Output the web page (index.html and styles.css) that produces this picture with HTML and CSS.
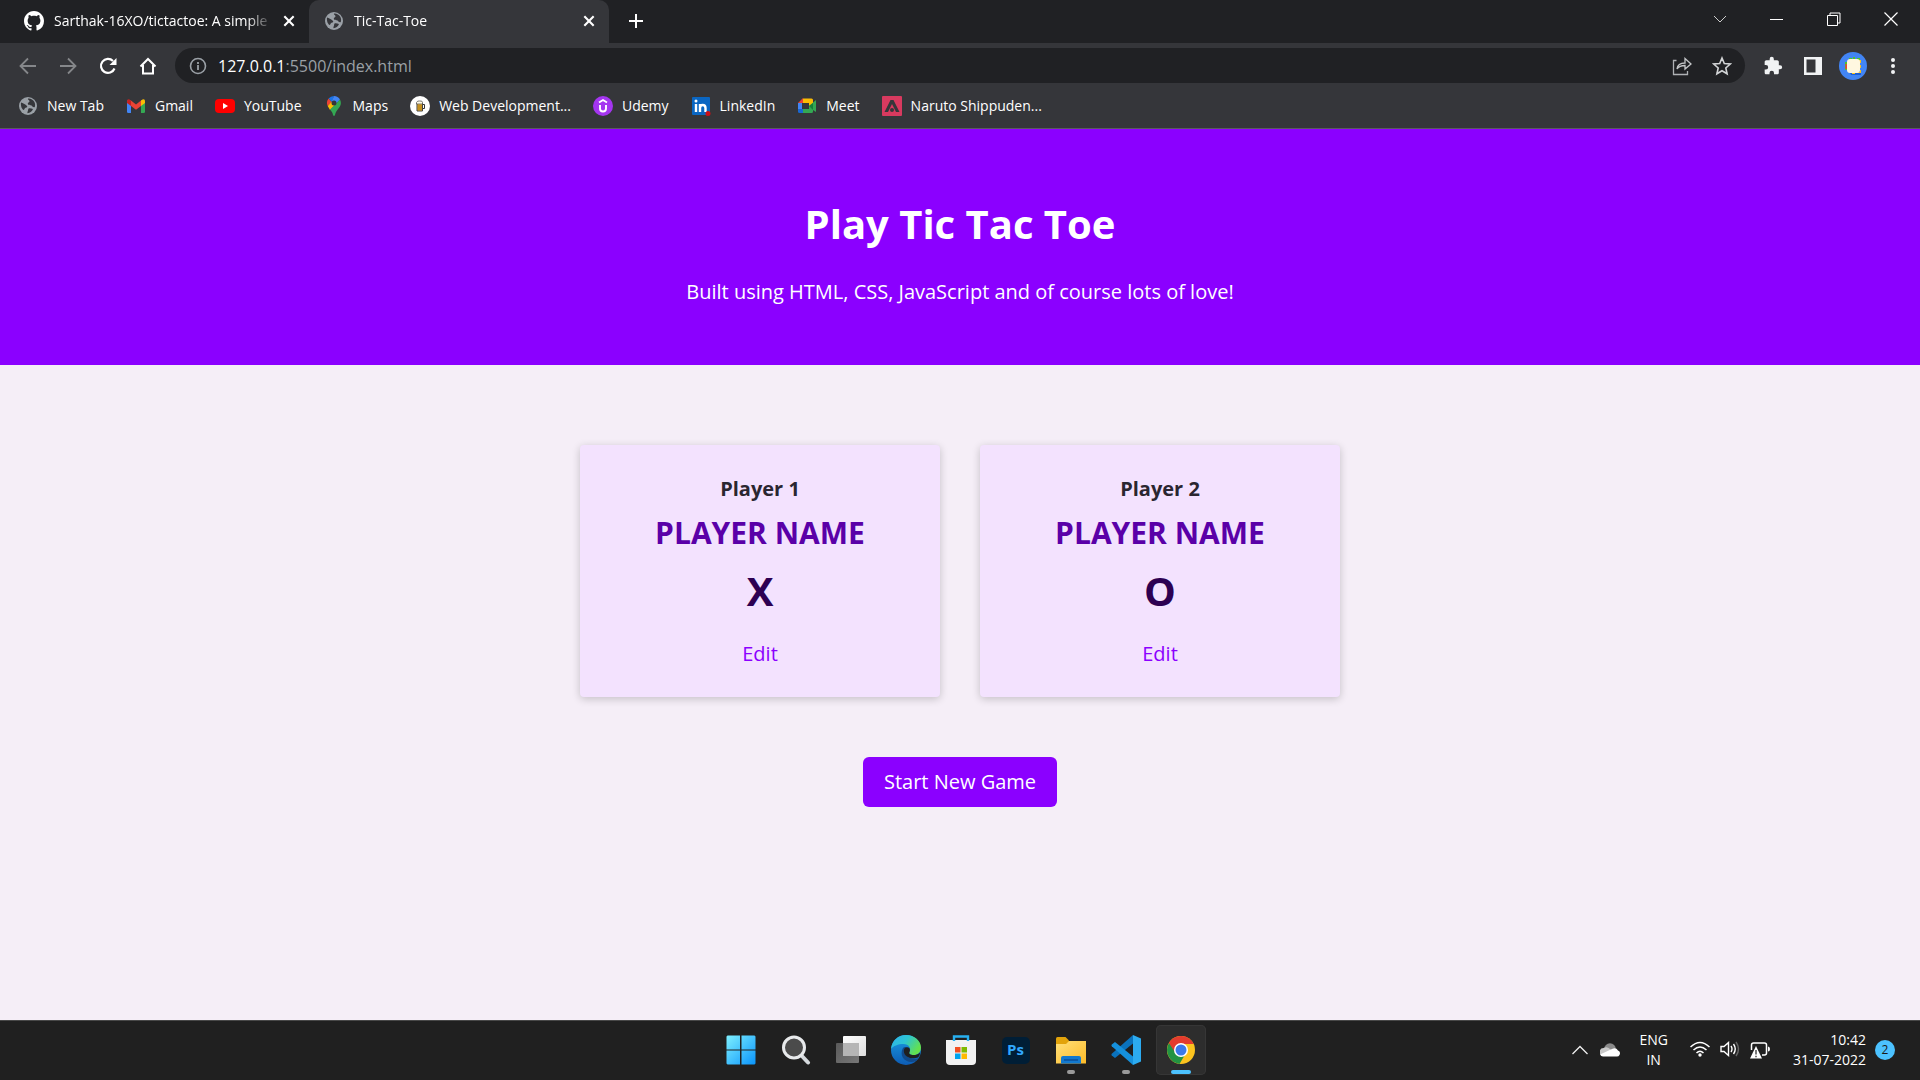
FILE: index.html
```html
<!DOCTYPE html>
<html lang="en">
<head>
<meta charset="utf-8">
<title>Tic-Tac-Toe</title>
<link rel="stylesheet" href="styles.css">
</head>
<body>
<svg class="defs" aria-hidden="true">
  <defs>
    <symbol id="globe" viewBox="0 0 20 20">
      <circle cx="10" cy="10" r="9" fill="#9aa0a6"/>
      <path d="M3 6.500C5 7 7 8 8.500 9.500c1.500 1.200.5 2-1 2.200-1.200.3-.8 2-1.800 2.300C4 13.500 2.500 10 3 6.500zM10 2.500c2.500-.3 5 1 6.400 3.500.8 1.800.9 3.500.4 5-1.500.8-2.300-.5-3.300-1.500-1.300-.8-2.500 0-3.500-1.300-.8-1.700 1.800-1.800 1.500-3.200C11 4 9.500 3.700 10 2.500zM10.500 12.500c1.500-.8 3 .3 4.500.5-1 2.500-3 4-5.500 4.200-.5-1.500.8-2 .5-3.200z" fill="#35363a"/>
    </symbol>
    <symbol id="cross" viewBox="0 0 12 12"><path d="M2 2l8 8M10 2l-8 8" stroke="#fff" stroke-width="1.800"/></symbol>
    <linearGradient id="win" x1="0" y1="0" x2="1" y2="1"><stop offset="0" stop-color="#7ef0ff"/><stop offset="1" stop-color="#0a94fb"/></linearGradient>
    <linearGradient id="view" x1="0" y1="0" x2="1" y2="1"><stop offset="0" stop-color="#fff"/><stop offset="1" stop-color="#ddd"/></linearGradient>
    <linearGradient id="pane" x1="0" y1="0" x2="1" y2="1"><stop offset="0" stop-color="#5a5a5a"/><stop offset="1" stop-color="#777"/></linearGradient>
    <linearGradient id="edgeTop" x1="0" y1="0" x2="1" y2=".5"><stop offset="0" stop-color="#2fb0ec"/><stop offset=".5" stop-color="#2dc5d4"/><stop offset="1" stop-color="#63e14e"/></linearGradient>
    <linearGradient id="edgeLow" x1="0" y1="0" x2="0" y2="1"><stop offset="0" stop-color="#1b9de2"/><stop offset="1" stop-color="#0d5cb5"/></linearGradient>
    <linearGradient id="folder" x1="0" y1="0" x2="1" y2="1"><stop offset="0" stop-color="#ffe07a"/><stop offset="1" stop-color="#fdbb28"/></linearGradient>
  </defs>
</svg>

<div class="browser">
  <div class="tabstrip">
    <div class="tab">
      <svg class="fav" viewBox="0 0 16 16"><path fill="#fff" d="M8 0C3.580 0 0 3.580 0 8c0 3.540 2.290 6.530 5.470 7.590.4.070.55-.17.55-.38 0-.19-.01-.82-.01-1.490-2.010.37-2.530-.49-2.690-.94-.09-.23-.48-.94-.82-1.130-.28-.15-.68-.52-.01-.53.63-.01 1.080.58 1.230.82.72 1.210 1.870.87 2.330.66.070-.52.28-.87.51-1.070-1.780-.2-3.640-.89-3.640-3.950 0-.87.31-1.590.82-2.150-.08-.2-.36-1.020.08-2.120 0 0 .67-.21 2.200.82.64-.18 1.320-.27 2-.27s1.360.09 2 .27c1.530-1.040 2.200-.82 2.200-.82.44 1.100.16 1.920.08 2.120.51.56.82 1.270.82 2.150 0 3.070-1.870 3.750-3.650 3.950.29.25.54.73.54 1.480 0 1.070-.01 1.930-.01 2.200 0 .21.15.46.55.38A8 8 0 0 0 16 8c0-4.420-3.580-8-8-8z"/></svg>
      <span class="tab-title">Sarthak-16XO/tictactoe: A simple</span>
      <button class="tab-close" aria-label="Close tab"><svg width="14" height="14"><use href="#cross"/></svg></button>
    </div>
    <div class="tab tab-active">
      <svg class="fav"><use href="#globe"/></svg>
      <span class="tab-title">Tic-Tac-Toe</span>
      <button class="tab-close" aria-label="Close tab"><svg width="14" height="14"><use href="#cross"/></svg></button>
    </div>
    <button class="new-tab" aria-label="New tab"><svg width="16" height="16" viewBox="0 0 16 16"><path d="M8 1v14M1 8h14" stroke="#fff" stroke-width="2"/></svg></button>
    <div class="window-controls">
      <button aria-label="Search tabs"><svg width="14" height="14" viewBox="0 0 14 14"><path d="M1 4l6 6 6-6" stroke="#ccc" fill="none"/></svg></button>
      <button aria-label="Minimise"><svg width="14" height="14" viewBox="0 0 14 14"><path d="M0 7.500h13" stroke="#fff"/></svg></button>
      <button aria-label="Restore"><svg width="14" height="14" viewBox="0 0 14 14"><path d="M.5 3.500h10v10H.500zM3 3V1h10v10h-2" stroke="#fff" fill="none"/></svg></button>
      <button aria-label="Close"><svg width="14" height="14" viewBox="0 0 14 14"><path d="M.5 .5l13 13M13.500 .5l-13 13" stroke="#fff" stroke-width="1.200"/></svg></button>
    </div>
  </div>

  <div class="toolbar">
    <button class="tool" aria-label="Back"><svg width="18" height="18" viewBox="0 0 18 18"><path d="M17 9H2M9 1.500L1.500 9 9 16.500" stroke="#85878a" stroke-width="1.800" fill="none"/></svg></button>
    <button class="tool" aria-label="Forward"><svg width="18" height="18" viewBox="0 0 18 18"><path d="M1 9h15M9 1.500L16.500 9 9 16.500" stroke="#85878a" stroke-width="1.800" fill="none"/></svg></button>
    <button class="tool" aria-label="Reload"><svg width="18" height="18" viewBox="0 0 18 18"><path d="M15.500 11.500A7 7 0 1 1 14 4" stroke="#fff" stroke-width="2.200" fill="none"/><path d="M17.500 1v7h-7z" fill="#fff"/></svg></button>
    <button class="tool" aria-label="Home"><svg width="18" height="18" viewBox="0 0 18 18"><path d="M1.500 9.500L9 2l7.500 7.500M4 8v8.500h10V8" stroke="#fff" stroke-width="2" fill="none"/></svg></button>
    <div class="omnibox">
      <button class="omni-btn" aria-label="Site information"><svg width="18" height="18" viewBox="0 0 18 18"><circle cx="9" cy="9" r="7.500" stroke="#9aa0a6" stroke-width="1.600" fill="none"/><path d="M9 8v5M9 5v2" stroke="#9aa0a6" stroke-width="1.800"/></svg></button>
      <a class="url" href="#"><span class="url-host">127.0.0.1</span>:5500/index.html</a>
      <button class="omni-btn" aria-label="Share"><svg width="20" height="20" viewBox="0 0 20 20"><path d="M4.500 4.500H1.500V18.500H15.500V15" stroke="#aeb1b4" stroke-width="1.300" fill="none"/><path d="M5 13c.5-4 3-6 8-6V2.500l6 5.500-6 5v-3.500c-4 0-6 .5-8 3.500z" stroke="#c4c6c8" stroke-width="1.300" fill="none"/></svg></button>
      <button class="omni-btn" aria-label="Bookmark this page"><svg width="20" height="20" viewBox="0 0 20 20"><path d="M10 2l2.300 5.500 6 .5-4.500 4 1.300 5.800L10 14.700 4.900 17.800 6.200 12 1.700 8l6-.5z" stroke="#d2d4d6" stroke-width="1.600" fill="none"/></svg></button>
    </div>
    <button class="tool" aria-label="Extensions"><svg width="20" height="20" viewBox="0 0 24 24"><path fill="#f1f3f4" d="M20.500 11H19V7c0-1.100-.9-2-2-2h-4V3.500a2.500 2.500 0 0 0-5 0V5H4c-1.100 0-2 .9-2 2v3.800h1.500a2.700 2.700 0 0 1 0 5.400H2V20c0 1.100.9 2 2 2h3.800v-1.500a2.700 2.700 0 0 1 5.400 0V22H17c1.100 0 2-.9 2-2v-4h1.500a2.500 2.500 0 0 0 0-5z"/></svg></button>
    <button class="tool" aria-label="Side panel"><svg width="18" height="18" viewBox="0 0 18 18"><path fill="#f1f3f4" fill-rule="evenodd" d="M0 0h18v18H0zM2.500 2.500v13h9v-13z"/></svg></button>
    <button class="tool" aria-label="Profile"><svg width="28" height="28" viewBox="0 0 28 28"><circle cx="14" cy="14" r="14" fill="#4285f4"/><path d="M10 19h12v4H12z" fill="#1d5fd6"/><path d="M20 8h2v3h-1v2h1v3h-1v2h1v3h-6v1h-3v-2h8z" fill="#fbc31b"/><path d="M7 10v8M10 7h3M14 6h2M18 7h3" stroke="#4ec52c" stroke-width="2"/><path d="M7.500 12v5" stroke="#e94335" stroke-width="2"/><rect x="8" y="7" width="13" height="14" rx="3" fill="#fff7e0"/></svg></button>
    <button class="tool" aria-label="Menu"><svg width="6" height="18" viewBox="0 0 6 18"><g fill="#f1f3f4"><circle cx="3" cy="3" r="2"/><circle cx="3" cy="9" r="2"/><circle cx="3" cy="15" r="2"/></g></svg></button>
  </div>

  <nav class="bookmarks" aria-label="Bookmarks">
    <a href="#"><svg><use href="#globe"/></svg>New Tab</a>
    <a href="#"><svg viewBox="0 0 20 20"><path d="M1 4.500h4V17H2.200Q1 17 1 15.800z" fill="#4285f4"/><path d="M15 4.500h4v11.300q0 1.200-1.200 1.200H15z" fill="#34a853"/><path d="M15 4.600l1.500-1.200Q19 2.500 19 5.500V7l-4 3z" fill="#fbbc04"/><path d="M5 4.600L3.500 3.400Q1 2.500 1 5.500V7l4 3z" fill="#c5221f"/><path d="M5 4.600l5 3.900 5-3.900V10l-5 3.800L5 10z" fill="#ea4335"/></svg>Gmail</a>
    <a href="#"><svg viewBox="0 0 20 20"><rect y="3" width="20" height="14" rx="4" fill="#f00"/><path d="M8 7v6l5-3z" fill="#fff"/></svg>YouTube</a>
    <a href="#"><svg viewBox="0 0 20 20"><path d="M4.600 2.500A7 7 0 0 0 3.700 10L8 6z" fill="#ea4335"/><path d="M3.700 10L12 1l1 7-7 6z" fill="#fbbc04"/><path d="M10 0a7 7 0 0 0-5.400 2.500L8 6z" fill="#1a73e8"/><path d="M10 0a7 7 0 0 1 6 3.500L12 8 8 5z" fill="#4285f4"/><path d="M16 3.500c1.500 3 1 5.500-.8 8C13 14.500 11.500 16 11 19q-1 2-2 0c-.3-2-1.200-3.600-3-5.500z" fill="#34a853"/><circle cx="10" cy="7" r="2.500" fill="#35363a"/></svg>Maps</a>
    <a href="#"><svg viewBox="0 0 20 20"><circle cx="10" cy="10" r="10" fill="#fff"/><path d="M12.500 8.500h2v4h-2" stroke="#333" fill="none"/><path d="M7 7h5.500v8H7z" fill="#f5b42a" stroke="#444"/><path d="M9 9v5M11 9v5" stroke="#7a5a10" stroke-width=".8"/><path d="M6.500 8V6.500q1-2 3-1.500 3-.5 3 1.500V8z" fill="#fffbe6" stroke="#555" stroke-width=".8"/></svg>Web Development...</a>
    <a href="#"><svg viewBox="0 0 20 20"><circle cx="10" cy="10" r="10" fill="#a435f0"/><path d="M7 9v3.500a3 3 0 0 0 6 0V9M6 6.500l4-2.500 4 2.500" stroke="#fff" stroke-width="1.900" fill="none"/></svg>Udemy</a>
    <a href="#"><svg viewBox="0 0 20 20"><rect x="1" y="1" width="18" height="18" rx="1" fill="#0a66c2"/><path d="M5 8v8M9 16V8M9 12q0-3 2.700-3T14.500 12v4" stroke="#fff" stroke-width="2.400" fill="none"/><circle cx="5" cy="5" r="1.500" fill="#fff"/><circle cx="17" cy="17.500" r="2.500" fill="#cc1016"/></svg>LinkedIn</a>
    <a href="#"><svg viewBox="0 0 20 20"><path d="M1 7l5-5v5z" fill="#ea4335"/><path d="M1 7h4v6H1z" fill="#4285f4"/><path d="M1 13h5v4H2.500Q1 17 1 15.500z" fill="#1967d2"/><path d="M6 2.500h8.500Q16 2.500 16 4v6h-4V7H6z" fill="#fbbc04"/><path d="M6 13h6v-3l7-6v12l-3-2v1.500Q16 17 14.500 17H6z" fill="#34a853"/><path d="M12 10l4-3v7z" fill="#188038"/></svg>Meet</a>
    <a href="#"><svg viewBox="0 0 20 20"><rect width="20" height="20" rx="1" fill="#d83a5f"/><path d="M2.500 16L8.500 4h3l6 12h-3.500L10 8l-4 8z" fill="#35363a"/><circle cx="10" cy="14" r="2" fill="#35363a"/></svg>Naruto Shippuden...</a>
  </nav>
</div>

<div class="page">
  <header class="hero">
    <h1>Play Tic Tac Toe</h1>
    <p>Built using HTML, CSS, JavaScript and of course lots of love!</p>
  </header>
  <main class="game">
    <ol class="players">
      <li class="player">
        <h3>Player 1</h3>
        <p class="player-name">PLAYER NAME</p>
        <p class="player-symbol">X</p>
        <button class="edit">Edit</button>
      </li>
      <li class="player">
        <h3>Player 2</h3>
        <p class="player-name">PLAYER NAME</p>
        <p class="player-symbol">O</p>
        <button class="edit">Edit</button>
      </li>
    </ol>
    <button class="start">Start New Game</button>
  </main>
</div>

<footer class="taskbar">
  <div class="apps">
    <button class="app" aria-label="Start"><svg viewBox="0 0 30 30"><path fill="url(#win)" d="M1.500 .5H14v14H.500v-13zM15.500 .5h13l1 1v13h-14zM.500 15.500H14v14H1.500l-1-1zM15.500 15.500h14v13l-1 1h-13z"/></svg></button>
    <button class="app" aria-label="Search"><svg viewBox="0 0 30 30"><path d="M20 20l7 7.500" stroke="#d5d9dd" stroke-width="4" stroke-linecap="round"/><circle cx="13" cy="12.500" r="10.500" fill="#4b4b4b" stroke="#e8eaec" stroke-width="3"/></svg></button>
    <button class="app" aria-label="Task view"><svg viewBox="0 0 30 30"><rect x="7" y="1" width="23" height="20" rx="1" fill="url(#view)"/><rect y="8" width="23" height="20" rx="1" fill="url(#pane)"/><path d="M7 8h16v13H7z" fill="#b5b5b5"/></svg></button>
    <button class="app" aria-label="Edge"><svg viewBox="0 0 30 30"><circle cx="15" cy="15" r="15" fill="url(#edgeLow)"/><path d="M0 14C1 5 7.500 0 15 0c8.500 0 15 6 15 12.500 0 5-3.500 7.500-7.500 7.500-3 0-5-1-4-3 2-3.500-.5-8-6-8C7 9 2 11 0 14z" fill="url(#edgeTop)"/><path d="M12 13c-4 7 1 14 8.500 14 3 0 5.500-1.500 7.500-4-5 2-12 .5-14-5-.5-2 .5-4 2-5.500-1.500-.7-3-.5-4 .5z" fill="#114a8b"/><path d="M12.800 16c0-2.500 1.700-4 3.700-3.800 2.500.3 3 2.800 2 4.800-1 2 1 3 4 3 2.500 0 4.500-.5 6.500-2.500 0 2-.8 4-2 5-5 2-14 .5-14.200-6.500z" fill="#202020"/></svg></button>
    <button class="app" aria-label="Microsoft Store"><svg viewBox="0 0 30 30"><path d="M0 5h30v21q0 4-4 4H4q-4 0-4-4z" fill="#f2f2f2"/><path d="M8 6V1.500h14V6" fill="none" stroke="#27b0f0" stroke-width="2.400"/><path d="M9 12h5.500v5.500H9z" fill="#f25022"/><path d="M15.500 12H21v5.500h-5.500z" fill="#7fba00"/><path d="M9 18.500h5.500V24H9z" fill="#00a4ef"/><path d="M15.500 18.500H21V24h-5.500z" fill="#ffb900"/></svg></button>
    <button class="app" aria-label="Photoshop"><span class="ps">Ps</span></button>
    <button class="app app-open" aria-label="File Explorer"><svg viewBox="0 0 30 30"><path d="M0 3.500q0-1.500 1.500-1.500h8l3.500 3.500V12H0z" fill="#e2a30b"/><path d="M0 9h10l3-3h17v22.500H0z" fill="url(#folder)"/><path d="M5 28.500V23q0-2 2-2h16q2 0 2 2v5.500z" fill="#1279cf"/><path d="M8 25h14" stroke="#0b4f9a" stroke-width="1.500"/></svg></button>
    <button class="app app-open" aria-label="Visual Studio Code"><svg viewBox="0 0 30 30"><path d="M22 0v8.500L4 23 .800 20.500q-.8-.8 0-1.800z" fill="#0a72bd"/><path d="M22 30v-8.500L4 7 .800 9.500q-.8.800 0 1.800z" fill="#1590dc"/><path d="M22 0l8 3.500v23L22 30z" fill="#2cabf0"/></svg></button>
    <button class="app app-open app-active" aria-label="Chrome"><svg viewBox="0 0 30 30"><circle cx="15" cy="15" r="14" fill="#fcc31e"/><path d="M15 15L2.900 8A14 14 0 0 0 13.500 28.900l6.500-11z" fill="#229342"/><path d="M2.900 8a14 14 0 0 1 24.700 1H15l-5.500 9z" fill="#e33b2e"/><circle cx="15" cy="15" r="7" fill="#fff"/><circle cx="15" cy="15" r="5.500" fill="#3b79ea"/></svg></button>
  </div>
  <div class="tray">
    <button aria-label="Show hidden icons"><svg width="16" height="10" viewBox="0 0 16 10"><path d="M.5 9L8 1.500 15.500 9" stroke="#eee" stroke-width="1.300" fill="none"/></svg></button>
    <button aria-label="OneDrive"><svg width="20" height="14" viewBox="0 0 20 14"><circle cx="10" cy="6" r="5.800" fill="#8a8a8a"/><path d="M4 13a4 4 0 0 1-.5-8Q7 3 10 6l6 5-4 2z" fill="#c9c9c9"/><path d="M3 13.500q-2 0-3-2L12 6q4-2 6 1.500 3 1 1.500 4.500-.8 1.500-2.500 1.500z" fill="#fff"/></svg></button>
    <span class="lang">ENG<br>IN</span>
    <button class="status" aria-label="Network, volume and battery">
      <svg width="20" height="16" viewBox="0 0 20 16"><path d="M.5 6q9.500-9 19 0M3.500 9q6.500-6 13 0M6.500 12q3.500-3.500 7 0" stroke="#fff" stroke-width="1.500" fill="none"/><circle cx="10" cy="14" r="1.700" fill="#fff"/></svg>
      <svg width="20" height="16" viewBox="0 0 20 16"><path d="M1 5.500h3L8.500 1.500v13L4 10.500H1zM11 5q2 3 0 6M13.500 3q3.500 5 0 10" stroke="#fff" stroke-width="1.400" fill="none"/><path d="M16 1q5 7 0 14" stroke="#666" stroke-width="1.400" fill="none"/></svg>
      <svg width="20" height="18" viewBox="0 0 20 18"><path d="M1.500 9V4q0-2 2-2h11q2 0 2 2v8q0 2-2 2H12" stroke="#fff" stroke-width="1.500" fill="none"/><path d="M18 5.500q2 0 2 2.500t-2 2.500z" fill="#fff"/><path d="M6 5l6 12.500H0z" fill="#fff"/><path d="M6 9v4.500M6 14.800v1.400" stroke="#202020" stroke-width="1.200"/></svg>
    </button>
    <span class="clock">10:42<br>31-07-2022</span>
    <span class="badge">2</span>
  </div>
</footer>
</body>
</html>
```
FILE: styles.css
```css
* { box-sizing: border-box; margin: 0; padding: 0; }

body {
  min-height: 100vh;
  display: flex;
  flex-direction: column;
  font-family: "Open Sans", "Noto Sans", sans-serif;
  background: #f5eef7;
}

button { border: 0; background: none; font: inherit; color: inherit; cursor: pointer; }
a { color: inherit; text-decoration: none; }
svg { display: block; flex: none; }
.defs { position: absolute; width: 0; height: 0; }

/* Browser chrome */
.browser { background: #35363a; color: #fff; border-bottom: 1px solid #5b5a60; }

.tabstrip { display: flex; height: 43px; padding-left: 9px; background: #202124; }
.tab {
  display: flex;
  align-items: center;
  width: 300px;
  padding: 0 13px 2px 15px;
  font-size: 14px;
}
.tab-active { background: #35363a; border-radius: 10px 10px 0 0; }
.fav { width: 20px; height: 20px; margin-right: 10px; }
.tab-title { flex: 1; overflow: hidden; white-space: nowrap; mask-image: linear-gradient(to right, #000 88%, transparent); }
.tab-close { display: flex; margin-left: 9px; }
.new-tab { display: flex; align-items: center; padding: 0 19px 2px; }
.window-controls { display: flex; margin-left: auto; padding: 0 1px 6px 0; }
.window-controls button { display: flex; align-items: center; justify-content: center; width: 57px; }

.toolbar { display: flex; align-items: center; height: 45px; padding: 0 7px 0 8px; }
.tool { display: flex; align-items: center; justify-content: center; width: 40px; height: 35px; }
.omnibox {
  flex: 1;
  display: flex;
  align-items: center;
  height: 35px;
  margin: 0 8px 0 7px;
  padding: 0 3px;
  border-radius: 18px;
  background: #202124;
}
.omni-btn { display: flex; align-items: center; justify-content: center; width: 40px; }
.url { flex: 1; color: #9aa0a6; font-size: 16px; }
.url-host { color: #fff; }

.bookmarks { display: flex; align-items: center; gap: 22px; height: 40px; padding: 0 18px 5px; font-size: 14px; }
.bookmarks a { display: flex; align-items: center; gap: 9px; white-space: nowrap; }
.bookmarks svg { width: 20px; height: 20px; }

/* Game page */
.page { flex: 1; font-size: 20px; line-height: 27px; text-align: center; }
.hero { padding: 68px 20px 60px; background: #8b00ff; color: #fff; }
.hero h1 { margin-bottom: 27px; font-size: 40px; line-height: 54px; }

.game { padding: 80px 20px; }
.players { display: flex; justify-content: center; gap: 40px; list-style: none; }
.player {
  width: 360px;
  padding: 30px;
  border-radius: 4px;
  background: #f3e2fe;
  box-shadow: 0 2px 8px rgba(0, 0, 0, 0.2);
}
.player h3 { font-size: 20px; color: #2a2630; }
.player-name { margin: 10px 0; font-size: 30px; line-height: 42px; font-weight: 700; color: #5a00a8; }
.player-symbol { margin-bottom: 22px; font-size: 40px; line-height: 54px; font-weight: 700; color: #2d0052; }
.edit { color: #8b00ff; }
.start { margin-top: 60px; padding: 11px 21px 12px; border-radius: 6px; background: #8b00ff; color: #fff; }

/* Desktop taskbar */
.taskbar {
  display: grid;
  grid-template-columns: 1fr auto 1fr;
  align-items: center;
  height: 60px;
  padding-bottom: 1px;
  border-top: 1px solid #484848;
  background: #202020;
  color: #fff;
}
.apps { grid-column: 2; display: flex; gap: 5px; padding-left: 1px; }
.app { position: relative; display: flex; align-items: center; justify-content: center; width: 50px; height: 50px; border-radius: 5px; }
.app svg { width: 30px; height: 30px; }
.app-open::after {
  content: "";
  position: absolute;
  bottom: 1px;
  left: 21px;
  width: 8px;
  height: 4px;
  border-radius: 2px;
  background: #9a9a9a;
}
.app-active { background: #2d2d2d; box-shadow: inset 0 0 0 1px #363636; }
.app-active::after { left: 15px; width: 20px; background: #4cc2ff; }
.ps { width: 28px; height: 27px; border-radius: 5px; background: #001e36; color: #31a8ff; font-size: 15px; line-height: 25px; font-weight: 700; }

.tray { display: flex; align-items: center; justify-content: flex-end; padding-right: 25px; font-size: 14px; line-height: 20px; }
.tray button { display: flex; margin-right: 12px; }
.lang { margin: 0 22px 0 7px; text-align: center; }
.tray .status { gap: 10px; margin-right: 23px; }
.clock { text-align: right; }
.badge { width: 20px; height: 20px; margin-left: 9px; border-radius: 50%; background: #4cc2ff; color: #1a1a1a; font-size: 12px; text-align: center; }
```
